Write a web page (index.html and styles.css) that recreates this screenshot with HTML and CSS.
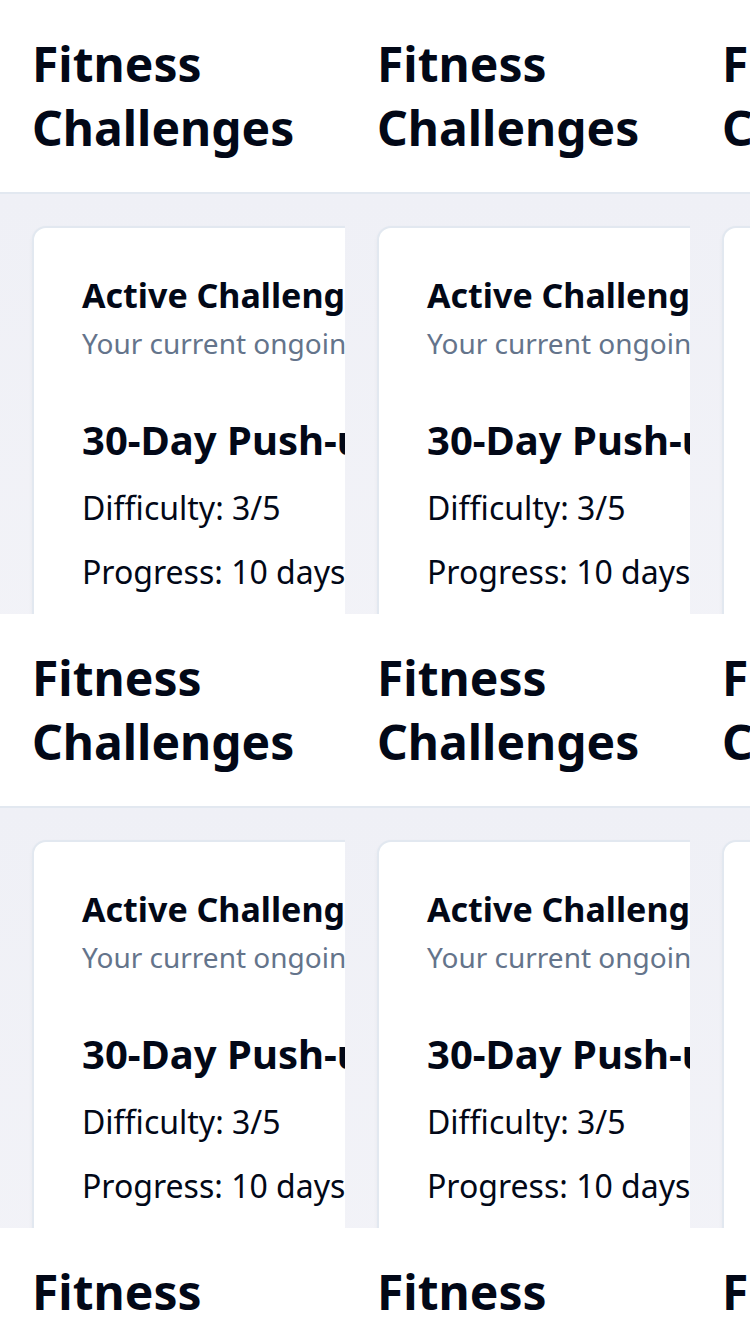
FILE: index.html
```html
<!DOCTYPE html>
<html lang="en">
<head>
<meta charset="utf-8">
<title>Fitness Challenges</title>
<link rel="stylesheet" href="styles.css">
</head>
<body>
<div class="grid">
  <div class="tile"><div class="app"><header class="top"><h1 class="title">Fitness Challenges</h1></header><main class="body"><section class="card"><div class="card-head"><h2 class="card-title">Active Challenges</h2><p class="card-sub">Your current ongoing challenges</p></div><div class="card-content"><h3 class="ch-name">30-Day Push-up Challenge</h3><p class="ch-line">Difficulty: 3/5</p><p class="ch-line">Progress: 10 days</p></div></section></main></div></div>
  <div class="tile"><div class="app"><header class="top"><h1 class="title">Fitness Challenges</h1></header><main class="body"><section class="card"><div class="card-head"><h2 class="card-title">Active Challenges</h2><p class="card-sub">Your current ongoing challenges</p></div><div class="card-content"><h3 class="ch-name">30-Day Push-up Challenge</h3><p class="ch-line">Difficulty: 3/5</p><p class="ch-line">Progress: 10 days</p></div></section></main></div></div>
  <div class="tile"><div class="app"><header class="top"><h1 class="title">Fitness Challenges</h1></header><main class="body"><section class="card"><div class="card-head"><h2 class="card-title">Active Challenges</h2><p class="card-sub">Your current ongoing challenges</p></div><div class="card-content"><h3 class="ch-name">30-Day Push-up Challenge</h3><p class="ch-line">Difficulty: 3/5</p><p class="ch-line">Progress: 10 days</p></div></section></main></div></div>
  <div class="tile"><div class="app"><header class="top"><h1 class="title">Fitness Challenges</h1></header><main class="body"><section class="card"><div class="card-head"><h2 class="card-title">Active Challenges</h2><p class="card-sub">Your current ongoing challenges</p></div><div class="card-content"><h3 class="ch-name">30-Day Push-up Challenge</h3><p class="ch-line">Difficulty: 3/5</p><p class="ch-line">Progress: 10 days</p></div></section></main></div></div>
  <div class="tile"><div class="app"><header class="top"><h1 class="title">Fitness Challenges</h1></header><main class="body"><section class="card"><div class="card-head"><h2 class="card-title">Active Challenges</h2><p class="card-sub">Your current ongoing challenges</p></div><div class="card-content"><h3 class="ch-name">30-Day Push-up Challenge</h3><p class="ch-line">Difficulty: 3/5</p><p class="ch-line">Progress: 10 days</p></div></section></main></div></div>
  <div class="tile"><div class="app"><header class="top"><h1 class="title">Fitness Challenges</h1></header><main class="body"><section class="card"><div class="card-head"><h2 class="card-title">Active Challenges</h2><p class="card-sub">Your current ongoing challenges</p></div><div class="card-content"><h3 class="ch-name">30-Day Push-up Challenge</h3><p class="ch-line">Difficulty: 3/5</p><p class="ch-line">Progress: 10 days</p></div></section></main></div></div>
  <div class="tile"><div class="app"><header class="top"><h1 class="title">Fitness Challenges</h1></header><main class="body"><section class="card"><div class="card-head"><h2 class="card-title">Active Challenges</h2><p class="card-sub">Your current ongoing challenges</p></div><div class="card-content"><h3 class="ch-name">30-Day Push-up Challenge</h3><p class="ch-line">Difficulty: 3/5</p><p class="ch-line">Progress: 10 days</p></div></section></main></div></div>
  <div class="tile"><div class="app"><header class="top"><h1 class="title">Fitness Challenges</h1></header><main class="body"><section class="card"><div class="card-head"><h2 class="card-title">Active Challenges</h2><p class="card-sub">Your current ongoing challenges</p></div><div class="card-content"><h3 class="ch-name">30-Day Push-up Challenge</h3><p class="ch-line">Difficulty: 3/5</p><p class="ch-line">Progress: 10 days</p></div></section></main></div></div>
  <div class="tile"><div class="app"><header class="top"><h1 class="title">Fitness Challenges</h1></header><main class="body"><section class="card"><div class="card-head"><h2 class="card-title">Active Challenges</h2><p class="card-sub">Your current ongoing challenges</p></div><div class="card-content"><h3 class="ch-name">30-Day Push-up Challenge</h3><p class="ch-line">Difficulty: 3/5</p><p class="ch-line">Progress: 10 days</p></div></section></main></div></div>
</div>
</body>
</html>
```
FILE: styles.css
```css
* { box-sizing: border-box; }
html, body {
  margin: 0;
  padding: 0;
  width: 750px;
  height: 1334px;
  overflow: hidden;
  background: #ffffff;
}
body {
  font-family: "Noto Sans", "Open Sans", sans-serif;
  color: #020817;
}
.grid {
  display: grid;
  grid-template-columns: repeat(3, 345px);
  grid-auto-rows: 614px;
}
.tile {
  width: 345px;
  height: 614px;
  overflow: hidden;
}
.app {
  width: 640px;
  height: 614px;
  display: flex;
  flex-direction: column;
}
.top {
  background: #ffffff;
  padding: 32px;
  border-bottom: 2px solid #e2e8f0;
}
.title {
  margin: 0;
  font-size: 48px;
  line-height: 64px;
  font-weight: 700;
  width: 300px;
}
.body {
  flex: 1;
  padding: 32px;
  background: linear-gradient(180deg, #eff0f6 0%, #f5f5f9 100%);
}
.card {
  background: #ffffff;
  border: 2px solid #e2e8f0;
  border-radius: 14px;
  height: 800px;
  box-shadow: 0 2px 4px rgba(15, 23, 42, 0.04);
}
.card-head {
  padding: 50px 48px 0;
  display: flex;
  flex-direction: column;
  gap: 11px;
}
.card-title {
  margin: 0;
  font-size: 34px;
  line-height: 34px;
  font-weight: 700;
  white-space: nowrap;
}
.card-sub {
  margin: 0;
  font-size: 28px;
  line-height: 40px;
  color: #64748b;
  white-space: nowrap;
}
.card-content {
  padding: 49px 48px 0;
  display: flex;
  flex-direction: column;
  gap: 16px;
}
.ch-name {
  margin: 0;
  font-size: 40px;
  line-height: 56px;
  font-weight: 700;
  white-space: nowrap;
}
.ch-line {
  margin: 0;
  font-size: 32px;
  line-height: 48px;
  white-space: nowrap;
}
```
